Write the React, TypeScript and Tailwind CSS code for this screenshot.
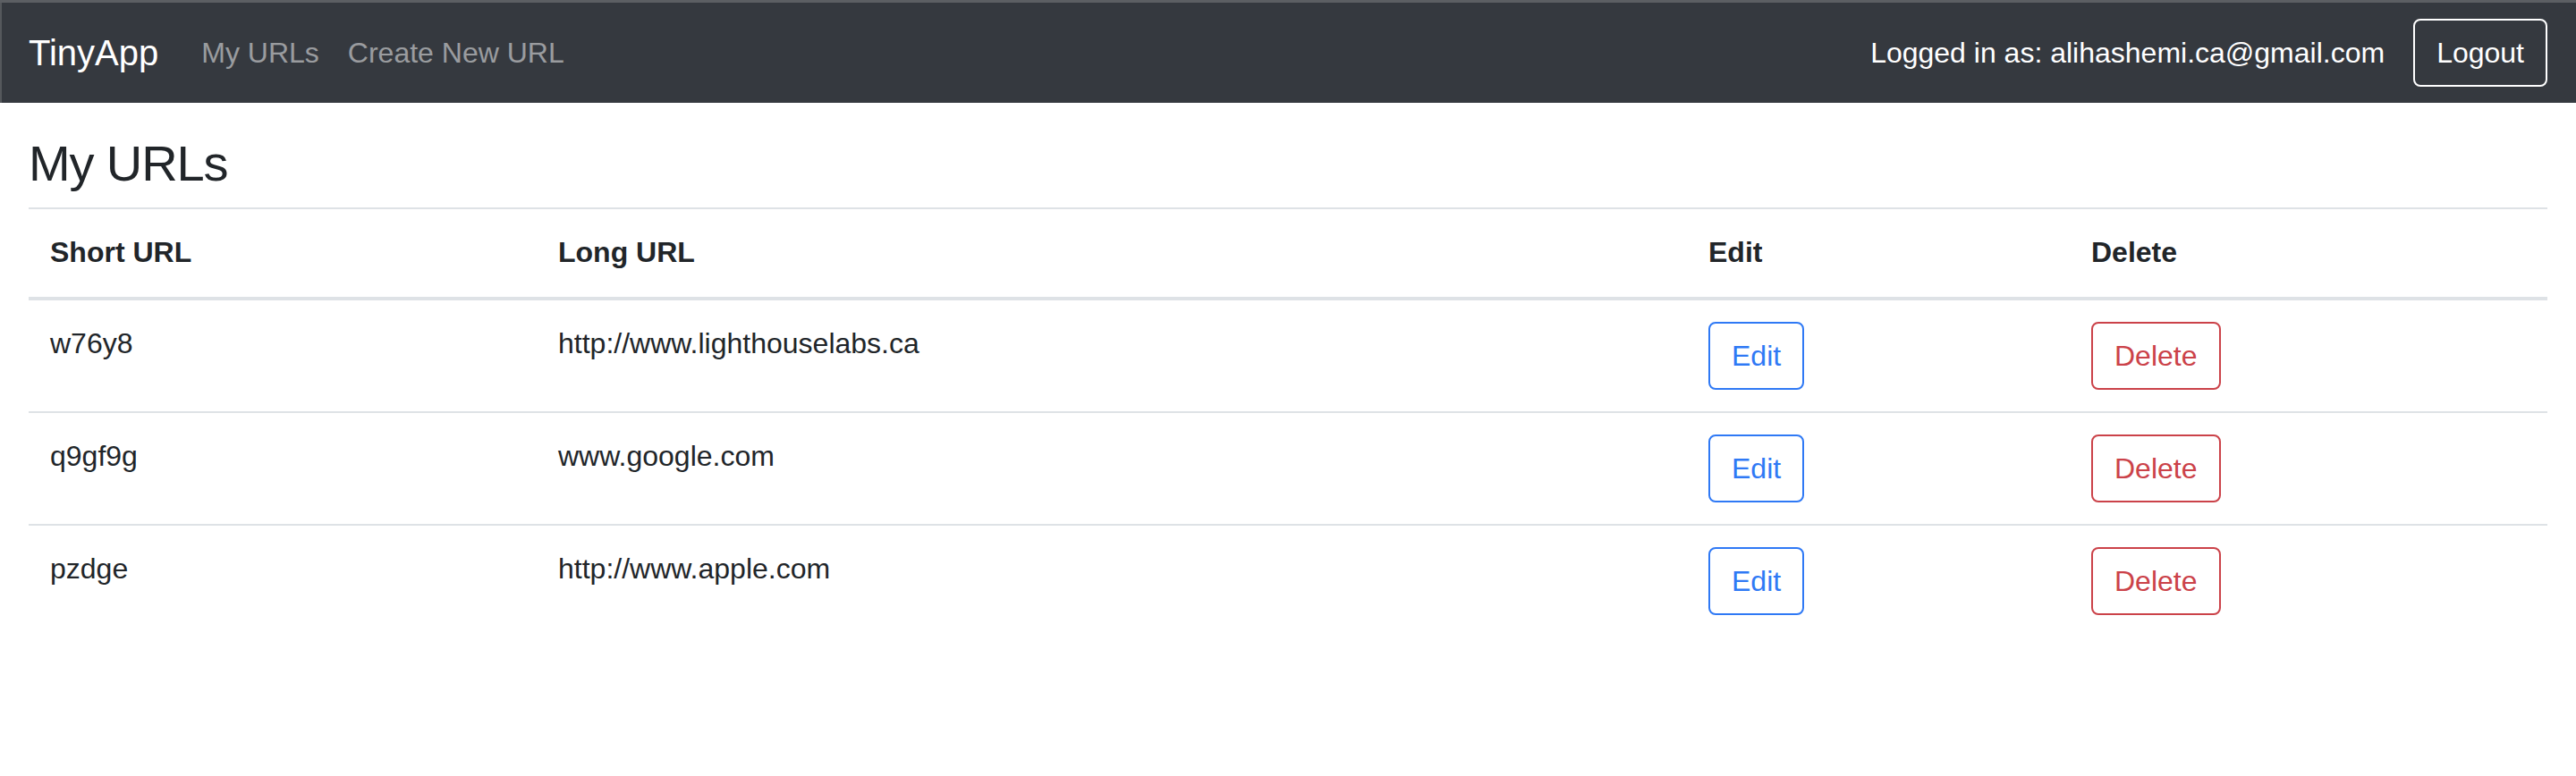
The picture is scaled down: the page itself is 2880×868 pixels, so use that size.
import React from "react";

const urls = [
  { short: "w76y8", long: "http://www.lighthouselabs.ca" },
  { short: "q9gf9g", long: "www.google.com" },
  { short: "pzdge", long: "http://www.apple.com" },
];

export default function App() {
  return (
    <div className="min-h-screen bg-white font-['Liberation_Sans',Arial,sans-serif] text-[#212529] border-t-[3px] border-[#5c5f63]">
      {/* Navbar */}
      <nav className="h-[112px] bg-[#35393f] flex items-center px-8 border-l-2 border-[#55585c]">
        <a href="#" className="text-[40px] leading-[60px] text-white mr-8 -ml-[2px]">
          TinyApp
        </a>
        <ul className="flex items-center">
          <li>
            <a href="#" className="block px-4 text-[32px] leading-[48px] text-white/50">
              My URLs
            </a>
          </li>
          <li>
            <a href="#" className="block px-4 text-[32px] leading-[48px] text-white/50">
              Create New URL
            </a>
          </li>
        </ul>
        <div className="ml-auto flex items-center">
          <span className="text-[32px] leading-[48px] text-white mr-8">
            Logged in as: alihashemi.ca@gmail.com
          </span>
          <button className="border-2 border-white rounded-lg px-6 py-3 text-[32px] leading-[48px] text-white">
            Logout
          </button>
        </div>
      </nav>

      {/* Main */}
      <main className="px-8 pt-[34px]">
        <h3 className="text-[56px] leading-[1.2] font-medium mb-4 tracking-[-0.02em]">My URLs</h3>
        <table className="w-full table-fixed border-collapse text-[32px] leading-[48px]">
          <thead>
            <tr>
              <th className="w-[568px] text-left font-bold px-6 pt-6 pb-[26px] align-bottom border-t-2 border-b-4 border-[#dee2e6]">
                Short URL
              </th>
              <th className="w-[1286px] text-left font-bold px-6 pt-6 pb-[26px] align-bottom border-t-2 border-b-4 border-[#dee2e6]">
                Long URL
              </th>
              <th className="w-[428px] text-left font-bold px-6 pt-6 pb-[26px] align-bottom border-t-2 border-b-4 border-[#dee2e6]">
                Edit
              </th>
              <th className="text-left font-bold px-6 pt-6 pb-[26px] align-bottom border-t-2 border-b-4 border-[#dee2e6]">
                Delete
              </th>
            </tr>
          </thead>
          <tbody>
            {urls.map((url) => (
              <tr key={url.short}>
                <td className="p-6 align-top border-t-2 border-[#dee2e6]">{url.short}</td>
                <td className="p-6 align-top border-t-2 border-[#dee2e6]">{url.long}</td>
                <td className="p-6 align-top border-t-2 border-[#dee2e6]">
                  <button className="border-2 border-[#2f79f5] text-[#2f79f5] rounded-lg px-6 py-3 leading-[48px]">
                    Edit
                  </button>
                </td>
                <td className="p-6 align-top border-t-2 border-[#dee2e6]">
                  <button className="border-2 border-[#cb4249] text-[#cb4249] rounded-lg px-6 py-3 leading-[48px]">
                    Delete
                  </button>
                </td>
              </tr>
            ))}
          </tbody>
        </table>
      </main>
    </div>
  );
}
